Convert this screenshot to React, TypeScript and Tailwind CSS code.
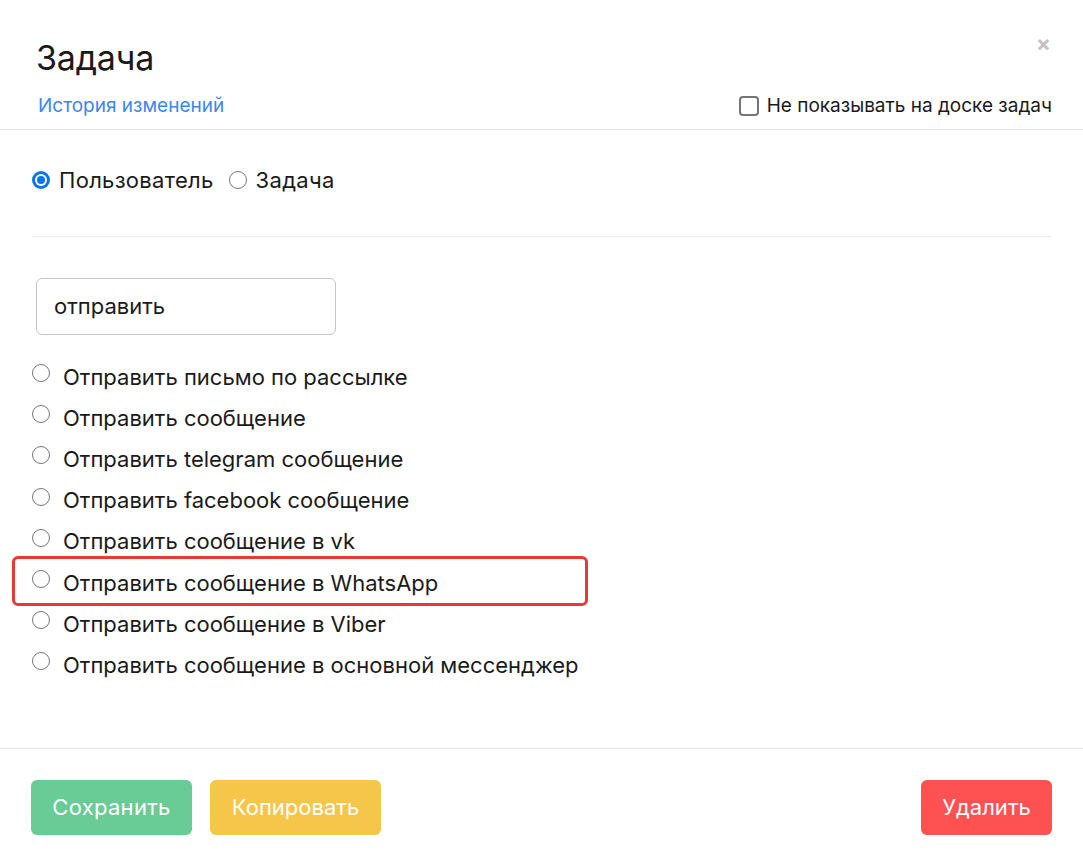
import { useState } from "react";

const actions = [
  "Отправить письмо по рассылке",
  "Отправить сообщение",
  "Отправить telegram сообщение",
  "Отправить facebook сообщение",
  "Отправить сообщение в vk",
  "Отправить сообщение в WhatsApp",
  "Отправить сообщение в Viber",
  "Отправить сообщение в основной мессенджер",
];

function Radio({ checked }: { checked?: boolean }) {
  if (checked) {
    return (
      <span className="w-[18px] h-[18px] rounded-full bg-[#0a74f0] flex items-center justify-center shrink-0">
        <span className="w-[12px] h-[12px] rounded-full bg-white flex items-center justify-center">
          <span className="w-[8px] h-[8px] rounded-full bg-[#0a74f0]" />
        </span>
      </span>
    );
  }
  return <span className="w-[18px] h-[18px] rounded-full border border-[#767676] bg-white shrink-0" />;
}

export default function App() {
  const [query] = useState("отправить");

  return (
    <div className="w-[1083px] h-[866px] bg-white flex flex-col text-[#1a1a1a] font-['Inter',sans-serif]">
      {/* header */}
      <div className="h-[130px] border-b border-[#e6e6e6] flex flex-col px-[36px] pt-[38px] relative">
        <h1 className="text-[34px] leading-[40px] tracking-[-0.2px]">Задача</h1>
        <div className="flex items-center justify-between mt-[14px]">
          <a className="text-[19px] text-[#3b86f0] ml-[2px]">История изменений</a>
          <label className="flex items-center gap-[8px] text-[19px] mr-[-5px]">
            <span className="w-[20px] h-[20px] rounded-[4px] border-2 border-[#757575]" />
            Не показывать на доске задач
          </label>
        </div>
        <span className="absolute right-[32px] top-[32px] text-[#c2c2c2] text-[22px] font-bold leading-none">×</span>
      </div>

      {/* body */}
      <div className="flex-1 px-[32px] flex flex-col">
        <div className="h-[107px] border-b border-[#ececec] flex items-center text-[22px] tracking-[0.3px] pb-[6px]">
          <label className="flex items-center gap-[9px]">
            <Radio checked />
            Пользователь
          </label>
          <label className="flex items-center gap-[9px] ml-[15px]">
            <Radio />
            Задача
          </label>
        </div>

        <div className="mt-[41px] ml-[4px] w-[300px] h-[57px] rounded-[6px] border border-[#c6c6c6] flex items-center px-[17px] text-[22px]">
          {query}
        </div>

        <div className="mt-[21px] flex flex-col relative">
          {actions.map((a, i) => (
            <label key={a} className="h-[41.2px] flex items-center gap-[13px] text-[22px] relative">
              <span className="-mt-[7px] flex">
                <Radio />
              </span>
              <span className="leading-none">{a}</span>
              {i === 5 && (
                <span className="absolute left-[-20px] top-[-6px] w-[576px] h-[50px] border-[3px] border-[#e53b35] rounded-[6px]" />
              )}
            </label>
          ))}
        </div>
      </div>

      {/* footer */}
      <div className="h-[118px] border-t border-[#e6e6e6] flex items-start justify-between px-[31px] pt-[31px]">
        <div className="flex gap-[18px]">
          <button className="w-[161px] h-[55px] rounded-[6px] bg-[#69cb95] text-white text-[22px] tracking-[0.3px]">Сохранить</button>
          <button className="w-[171px] h-[55px] rounded-[6px] bg-[#f6c64a] text-white text-[22px]">Копировать</button>
        </div>
        <button className="w-[131px] h-[55px] rounded-[6px] bg-[#fe5252] text-white text-[22px]">Удалить</button>
      </div>
    </div>
  );
}
